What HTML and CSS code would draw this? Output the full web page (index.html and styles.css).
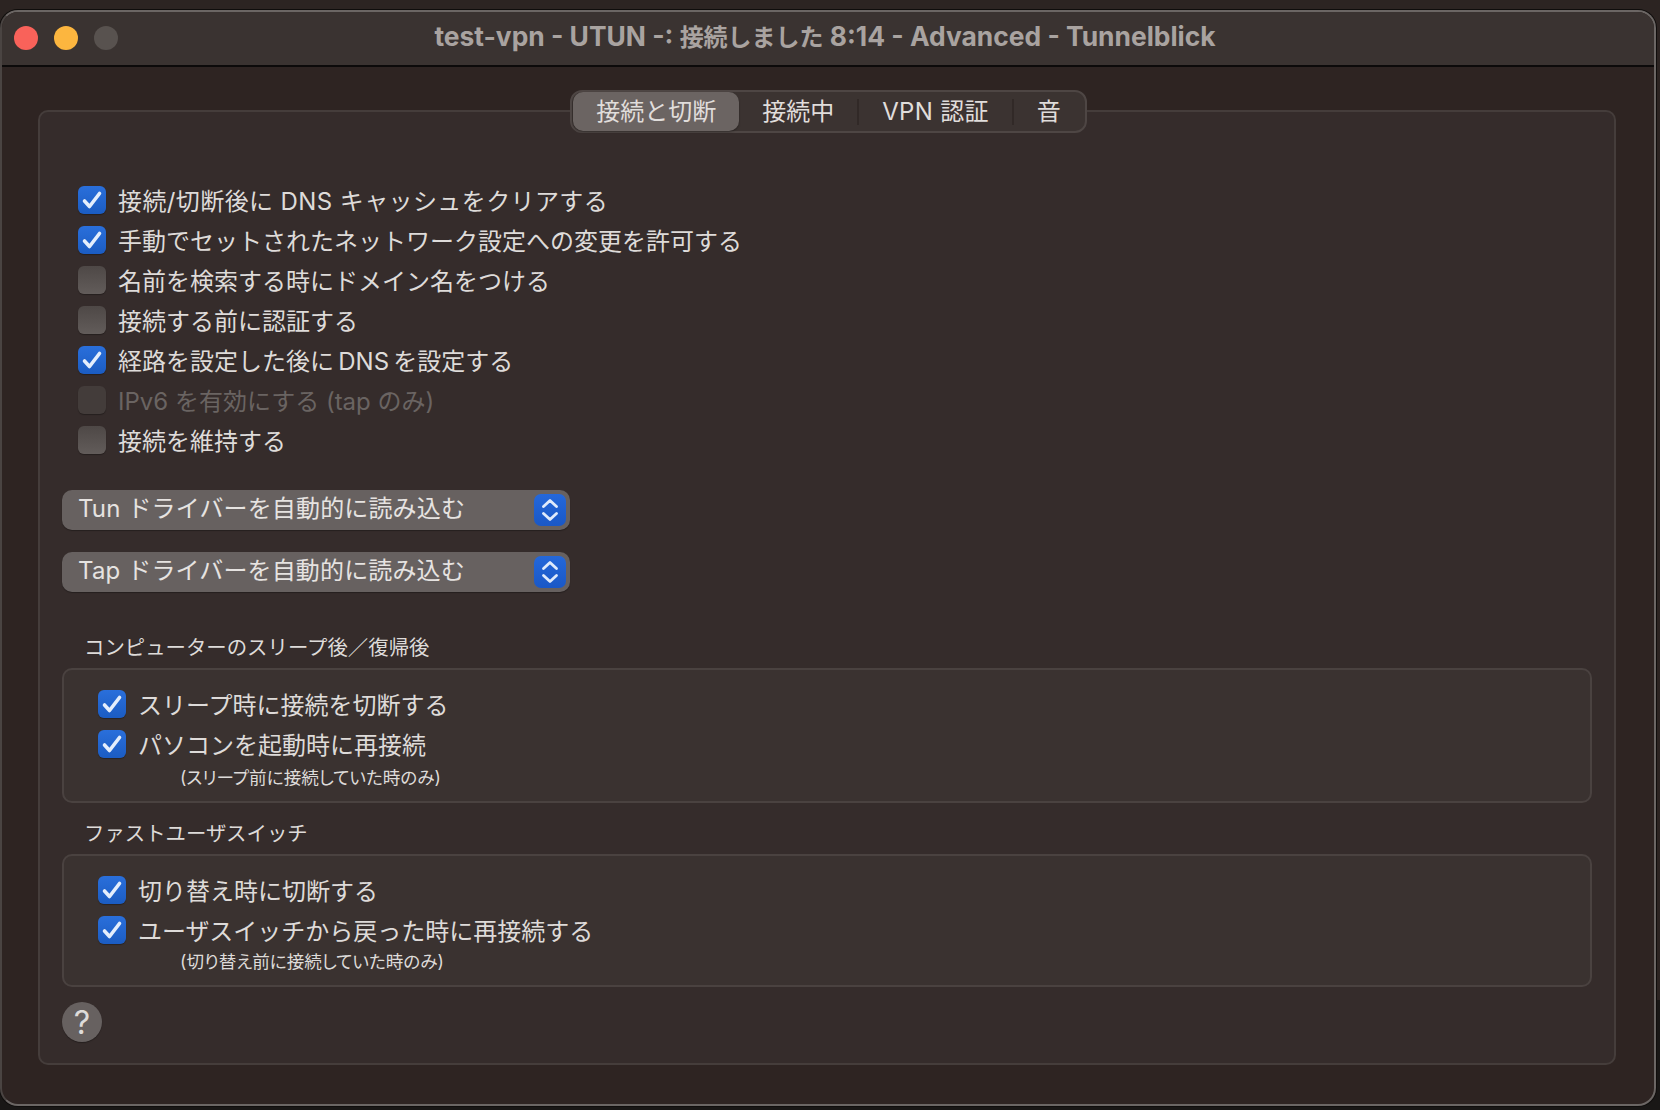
FILE: index.html
```html
<!DOCTYPE html>
<html lang="ja">
<head>
<meta charset="utf-8">
<title>Tunnelblick</title>
<link rel="stylesheet" href="styles.css">
</head>
<body>
<svg class="defs" width="0" height="0" aria-hidden="true">
  <symbol id="tick" viewBox="0 0 28 28"><path d="M6.5 15l5 5.5L21.5 7.5" fill="none" stroke="#e4eefc" stroke-width="3.6" stroke-linecap="round" stroke-linejoin="round"/></symbol>
  <symbol id="updown" viewBox="0 0 32 32"><path d="M9.5 12.5L16 6.5l6.5 6M9.5 19.5l6.5 6 6.5-6" fill="none" stroke="#dfeafb" stroke-width="2.8" stroke-linecap="round" stroke-linejoin="round"/></symbol>
</svg>
<main class="window">
  <header class="titlebar">
    <div class="lights">
      <span class="light light-red"></span>
      <span class="light light-yellow"></span>
      <span class="light light-gray"></span>
    </div>
    <h1 class="title">test-vpn - UTUN -: <span class="title-ja">接続しました</span> 8:14 - Advanced - Tunnelblick</h1>
  </header>
  <div class="content">
    <section class="panel">
      <nav class="tabs">
        <span class="tab tab-active">接続と切断</span>
        <span class="tab">接続中</span>
        <span class="sep"></span>
        <span class="tab tab-wide">VPN 認証</span>
        <span class="sep"></span>
        <span class="tab">音</span>
      </nav>
      <div class="options">
        <label class="row"><span class="box checked"><svg class="tick"><use href="#tick"/></svg></span><span class="lab lab-wide">接続/切断後に DNS キャッシュをクリアする</span></label>
        <label class="row"><span class="box checked"><svg class="tick"><use href="#tick"/></svg></span><span class="lab">手動でセットされたネットワーク設定への変更を許可する</span></label>
        <label class="row"><span class="box"></span><span class="lab">名前を検索する時にドメイン名をつける</span></label>
        <label class="row"><span class="box"></span><span class="lab">接続する前に認証する</span></label>
        <label class="row"><span class="box checked"><svg class="tick"><use href="#tick"/></svg></span><span class="lab lab-tight">経路を設定した後に DNS を設定する</span></label>
        <label class="row row-disabled"><span class="box box-disabled"></span><span class="lab">IPv6 を有効にする (tap のみ)</span></label>
        <label class="row"><span class="box"></span><span class="lab">接続を維持する</span></label>
      </div>
      <div class="selects">
        <div class="select"><span class="select-text">Tun ドライバーを自動的に読み込む</span><span class="stepper"><svg class="updown"><use href="#updown"/></svg></span></div>
        <div class="select"><span class="select-text">Tap ドライバーを自動的に読み込む</span><span class="stepper"><svg class="updown"><use href="#updown"/></svg></span></div>
      </div>
      <h2 class="group-label group-label-first">コンピューターのスリープ後／復帰後</h2>
      <div class="group">
        <label class="row"><span class="box checked"><svg class="tick"><use href="#tick"/></svg></span><span class="lab">スリープ時に接続を切断する</span></label>
        <label class="row"><span class="box checked"><svg class="tick"><use href="#tick"/></svg></span><span class="lab">パソコンを起動時に再接続</span></label>
        <p class="note">(スリープ前に接続していた時のみ)</p>
      </div>
      <h2 class="group-label">ファストユーザスイッチ</h2>
      <div class="group">
        <label class="row"><span class="box checked"><svg class="tick"><use href="#tick"/></svg></span><span class="lab">切り替え時に切断する</span></label>
        <label class="row"><span class="box checked"><svg class="tick"><use href="#tick"/></svg></span><span class="lab">ユーザスイッチから戻った時に再接続する</span></label>
        <p class="note note-tight">(切り替え前に接続していた時のみ)</p>
      </div>
      <div class="help">?</div>
    </section>
  </div>
</main>
</body>
</html>
```
FILE: styles.css
```css
* { box-sizing: border-box; }

html, body {
  margin: 0;
  height: 1110px;
  overflow: hidden;
}

body {
  background: linear-gradient(#2c2422 0, #2c2422 1000px, #191716 1000px);
  padding-top: 10px;
  font-family: "Inter", "Noto Sans CJK JP", sans-serif;
  color: #dedbd9;
}

.defs { position: absolute; }

.window {
  width: 1656px;
  height: 1096px;
  background: #2e2422;
  border: 2px solid #6b6664;
  border-left-color: #4a4442;
  border-radius: 18px;
  box-shadow: 0 0 0 1px #0f0d0c;
  overflow: hidden;
  display: flex;
  flex-direction: column;
}

.titlebar {
  height: 55px;
  flex: none;
  display: grid;
  grid-template-columns: 1fr auto 1fr;
  align-items: center;
  background: #3a3331;
  border-bottom: 2px solid #0c0a0a;
}

.lights {
  display: flex;
  gap: 16px;
  padding: 0 0 1px 12px;
}

.light {
  width: 24px;
  height: 24px;
  border-radius: 50%;
}
.light-red { background: #f9625a; }
.light-yellow { background: #fcb63f; }
.light-gray { background: #58524f; }

.title {
  margin: 0 0 7px -6px;
  font-size: 26.4px;
  font-weight: 700;
  color: #a9a3a0;
  white-space: nowrap;
}

.title-ja {
  font-size: 24px;
  font-weight: 600;
}

.content {
  flex: 1;
  padding: 43px 38px 0 36px;
}

.panel {
  height: 955px;
  background: #352c2b;
  border: 2px solid #453d3b;
  border-radius: 10px;
  padding: 0 22px;
  display: flex;
  flex-direction: column;
}

.tabs {
  align-self: center;
  flex: none;
  margin: -22px 0 0 3px;
  height: 43px;
  padding: 0 1px;
  display: flex;
  align-items: center;
  background: #3b3331;
  border: 2px solid #4e4644;
  border-radius: 12px;
}

.tab {
  height: 39px;
  padding: 0 23px 5px;
  display: flex;
  align-items: center;
  font-size: 24px;
  color: #e0dddb;
  white-space: nowrap;
}

.tab-wide { letter-spacing: .3px; }

.tab-active {
  background: #6b6462;
  border-radius: 10px;
  box-shadow: 0 1px 2px rgba(0, 0, 0, .35);
}

.sep {
  width: 2px;
  height: 26px;
  background: #312927;
}

.options {
  margin-top: 53px;
  padding-left: 16px;
  display: flex;
  flex-direction: column;
  gap: 12px;
}

.row {
  height: 28px;
  display: flex;
  align-items: center;
  gap: 12px;
  font-size: 24px;
  line-height: 28px;
  white-space: nowrap;
  color: #dedbd9;
}

.lab { margin-top: 3px; }
.lab-wide { letter-spacing: .4px; }
.lab-tight { word-spacing: -2.5px; }

.row-disabled { color: #6a6462; }

.box {
  width: 28px;
  height: 28px;
  flex: none;
  border-radius: 6px;
  background: linear-gradient(#4e4846, #625c5a);
  box-shadow: 0 1px 1px rgba(0, 0, 0, .3);
}

.box.checked {
  background: linear-gradient(#2a6fdb, #1b5cc2);
}

.box-disabled {
  background: #433c3a;
}

.tick {
  display: block;
  width: 28px;
  height: 28px;
}

.selects {
  margin-top: 36px;
  display: flex;
  flex-direction: column;
  gap: 22px;
}

.select {
  width: 508px;
  height: 40px;
  padding: 0 4px 0 16px;
  display: flex;
  align-items: center;
  justify-content: space-between;
  background: #676160;
  border-radius: 10px;
  font-size: 24px;
  letter-spacing: .15px;
  color: #e6e3e1;
  white-space: nowrap;
  box-shadow: 0 1px 1px rgba(0, 0, 0, .3);
}

.select-text { margin-bottom: 7px; }

.stepper {
  width: 32px;
  height: 32px;
  border-radius: 7px;
  background: linear-gradient(#2468da, #1a58c6);
}

.updown {
  display: block;
  width: 32px;
  height: 32px;
}

.group-label {
  margin: 19px 0 8px 22px;
  font-size: 20.4px;
  line-height: 24px;
  font-weight: 400;
  color: #dedbd9;
}

.group-label-first { margin-top: 44px; }

.group {
  padding: 20px 34px 11px;
  background: #3a3230;
  border: 2px solid #4a4240;
  border-radius: 10px;
  display: flex;
  flex-direction: column;
  gap: 12px;
}

.note {
  margin: -4px 0 0 82px;
  font-size: 17.6px;
  font-feature-settings: "palt";
  line-height: 24px;
  color: #dedbd9;
}

.note-tight { margin-top: -6px; }

.help {
  margin-top: 15px;
  width: 40px;
  height: 40px;
  border-radius: 50%;
  background: #676160;
  display: flex;
  align-items: center;
  justify-content: center;
  font-size: 32px;
  font-weight: 400;
  color: #dedbd9;
  box-shadow: 0 1px 1px rgba(0, 0, 0, .3);
}
```
